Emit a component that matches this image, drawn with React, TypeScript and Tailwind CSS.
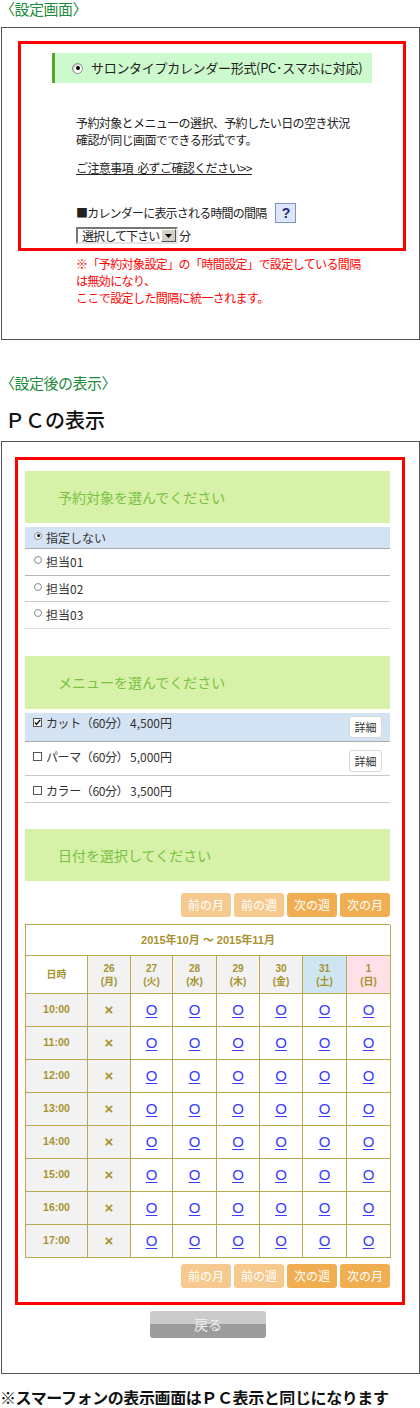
import React from "react";

const FONT = "font-['Noto_Sans_CJK_JP',sans-serif]";
const NUMFONT = "font-['Liberation_Sans','Noto_Sans_CJK_JP',sans-serif]";

function BigRadio() {
  return (
    <div className="w-[11px] h-[11px] rounded-full border border-[#8a8a8a] bg-white flex items-center justify-center shadow-[inset_1px_1px_1px_rgba(0,0,0,0.25)]">
      <div className="w-[4px] h-[4px] rounded-full bg-black" />
    </div>
  );
}

function SmallRadio({ checked }: { checked: boolean }) {
  return (
    <div className="w-[8px] h-[8px] rounded-full border border-[#8a8a8a] bg-white flex items-center justify-center">
      {checked && <div className="w-[3px] h-[3px] rounded-full bg-black" />}
    </div>
  );
}

function Check({ checked }: { checked: boolean }) {
  return (
    <div className="w-[9px] h-[9px] border border-[#555] bg-white flex items-center justify-center">
      {checked && (
        <svg width="7" height="7" viewBox="0 0 7 7">
          <path d="M0.8 3.4 L2.6 5.4 L6.2 0.9" stroke="#111" strokeWidth="1.4" fill="none" />
        </svg>
      )}
    </div>
  );
}

function GreenHeader({ text, h }: { text: string; h: string }) {
  return (
    <div className={`w-[365px] ${h} bg-[#d7f2a8] flex items-center pl-[33px] text-[14px] text-[#79c143]`}>
      {text}
    </div>
  );
}

function NavButtons() {
  const btns = [
    { t: "前の月", light: true },
    { t: "前の週", light: true },
    { t: "次の週", light: false },
    { t: "次の月", light: false },
  ];
  return (
    <div className="w-[365px] flex justify-end gap-[3px]">
      {btns.map((b) => (
        <div
          key={b.t}
          className={`w-[50px] h-[24px] rounded-[3px] flex items-center justify-center text-[12px] text-white ${
            b.light ? "bg-[#f6ca8f]" : "bg-[#f0ae50]"
          }`}
        >
          {b.t}
        </div>
      ))}
    </div>
  );
}

const days = [
  { d: "26", w: "(月)", bg: "bg-[#f2f2f2]" },
  { d: "27", w: "(火)", bg: "bg-[#f2f2f2]" },
  { d: "28", w: "(水)", bg: "bg-[#f2f2f2]" },
  { d: "29", w: "(木)", bg: "bg-[#f2f2f2]" },
  { d: "30", w: "(金)", bg: "bg-[#f2f2f2]" },
  { d: "31", w: "(土)", bg: "bg-[#cfe6f2]" },
  { d: "1", w: "(日)", bg: "bg-[#fde0e8]" },
];

const times = ["10:00", "11:00", "12:00", "13:00", "14:00", "15:00", "16:00", "17:00"];

function Calendar() {
  const cell = "border-r border-b border-[#b9a84e] flex items-center justify-center";
  return (
    <div className="w-[365px] border-l border-t border-[#b9a84e] grid grid-cols-[62px_43px_42px_44px_43px_43px_44px_44px]">
      <div className={`col-span-8 h-[31px] ${cell} bg-white text-[11px] font-bold text-[#a8922f] ${NUMFONT}`}>
        2015年10月 ～ 2015年11月
      </div>
      <div className={`h-[38px] ${cell} bg-white text-[10px] font-bold text-[#a8922f] ${NUMFONT}`}>日時</div>
      {days.map((d) => (
        <div
          key={d.d}
          className={`h-[38px] ${cell} ${d.bg} flex-col text-[10px] leading-[13px] font-bold text-[#a8922f] ${NUMFONT}`}
        >
          <span>{d.d}</span>
          <span>{d.w}</span>
        </div>
      ))}
      {times.map((t) => (
        <React.Fragment key={t}>
          <div className={`h-[33px] ${cell} bg-[#f2f2f2] text-[10.5px] font-bold text-[#a8922f] ${NUMFONT}`}>{t}</div>
          <div className={`h-[33px] ${cell} bg-[#f2f2f2] text-[15px] font-bold text-[#a8922f] ${NUMFONT}`}>×</div>
          {[0, 1, 2, 3, 4, 5].map((i) => (
            <div key={i} className={`h-[33px] ${cell} bg-white`}>
              <span className="font-['Liberation_Sans',sans-serif] text-[15px] leading-[16px] text-[#3b3bff] underline underline-offset-[2px]">
                O
              </span>
            </div>
          ))}
        </React.Fragment>
      ))}
    </div>
  );
}

const staff = [
  { t: "指定しない", checked: true, h: "h-[22px]", bg: "bg-[#d4e3f4]", b: "border-[#aaaaaa]" },
  { t: "担当01", checked: false, h: "h-[27px]", bg: "bg-white", b: "border-[#b5b5b5]" },
  { t: "担当02", checked: false, h: "h-[26px]", bg: "bg-white", b: "border-[#c8c8c8]" },
  { t: "担当03", checked: false, h: "h-[27px]", bg: "bg-white", b: "border-[#dddddd]" },
];

const menus = [
  { n: "カット（60分）", p: "4,500円", checked: true, h: "h-[29px]", pt: "pt-[2px]", bg: "bg-[#d4e3f4]", b: "border-[#aaaaaa]", detail: true },
  { n: "パーマ（60分）", p: "5,000円", checked: false, h: "h-[34px]", pt: "pt-[7px]", bg: "bg-white", b: "border-[#c8c8c8]", detail: true },
  { n: "カラー（60分）", p: "3,500円", checked: false, h: "h-[27px]", pt: "pt-[7px]", bg: "bg-white", b: "border-[#c8c8c8]", detail: false },
];

export default function App() {
  return (
    <div className={`w-[420px] bg-white text-[#222] ${FONT}`}>
      <p className="text-[15px] leading-[18px] tracking-[-0.5px] text-[#1d8b3b]">〈設定画面〉</p>

      <div className="mt-[9px] ml-[1px] w-[419px] h-[313px] border border-[#555]">
        <div className="mt-[13px] ml-[16px] w-[388px] h-[210px] border-[3px] border-[#ff0000]">
          <div className="mt-[9px] ml-[31px] w-[320px] h-[30px] bg-[#ccfacc] border-l-[3px] border-[#5aa52c] flex items-center pl-[17px] gap-[8px]">
            <BigRadio />
            <span className="text-[13px] text-[#222] tracking-[-0.3px]">サロンタイプカレンダー形式(PC･スマホに対応)</span>
          </div>
          <div className="ml-[55px] mt-[31px] text-[12px] leading-[17px] tracking-[-0.6px]">
            <p>予約対象とメニューの選択、予約したい日の空き状況</p>
            <p>確認が同じ画面でできる形式です。</p>
          </div>
          <p className="ml-[55px] mt-[11px] text-[12px] leading-[17px] tracking-[-0.6px] underline">
            ご注意事項&nbsp;&nbsp;必ずご確認ください&gt;&gt;
          </p>
          <div className="ml-[55px] mt-[27px] h-[20px] flex items-center">
            <span className="text-[12px] tracking-[-0.8px]">■カレンダーに表示される時間の間隔</span>
            <div className="ml-[9px] w-[21px] h-[20px] bg-[#dfe6f7] border border-[#7f93c9] flex items-center justify-center text-[14px] font-bold text-[#1c2a78] font-['Liberation_Sans',sans-serif]">
              ?
            </div>
          </div>
          <div className="ml-[55px] mt-[4px] h-[17px] flex items-center">
            <div className="w-[102px] h-[17px] border-2 border-t-[#777] border-l-[#777] border-b-[#e5e5e5] border-r-[#e5e5e5] bg-white flex items-center">
              <span className="flex-1 pl-[4px] whitespace-nowrap text-[12px] leading-[14px] tracking-[-0.9px]">選択して下さい</span>
              <div className="w-[15px] h-[13px] bg-[#d4d0c8] border border-t-white border-l-white border-b-[#555] border-r-[#555] flex items-center justify-center">
                <svg width="7" height="4" viewBox="0 0 7 4">
                  <path d="M0 0 H7 L3.5 4 Z" fill="#000" />
                </svg>
              </div>
            </div>
            <span className="ml-[1px] text-[12px]">分</span>
          </div>
        </div>
        <div className="ml-[74px] mt-[4px] text-[12px] leading-[17px] tracking-[-0.6px] text-[#ff0000]">
          <p>※「予約対象設定」の「時間設定」で設定している間隔</p>
          <p>は無効になり、</p>
          <p>ここで設定した間隔に統一されます。</p>
        </div>
      </div>

      <p className="mt-[34px] text-[15px] leading-[18px] tracking-[-0.5px] text-[#1d8b3b]">〈設定後の表示〉</p>
      <p className="mt-[16px] ml-[5px] text-[20px] leading-[24px] font-medium text-[#111]">ＰＣの表示</p>

      <div className="mt-[9px] ml-[1px] w-[419px] border border-[#555] pb-[35px]">
        <div className="mt-[15px] ml-[13px] w-[390px] border-[3px] border-[#ff0000] pl-[7px] pt-[11px] pb-[14px]">
          <GreenHeader text="予約対象を選んでください" h="h-[52px]" />
          <div className="mt-[4px] w-[365px]">
            {staff.map((s) => (
              <div key={s.t} className={`${s.h} ${s.bg} border-b ${s.b} flex items-center pl-[9px] gap-[4px] text-[12px] text-[#333]`}>
                <div className="-mt-[4px]">
                  <SmallRadio checked={s.checked} />
                </div>
                <span>{s.t}</span>
              </div>
            ))}
          </div>

          <div className="mt-[27px]">
            <GreenHeader text="メニューを選んでください" h="h-[53px]" />
          </div>
          <div className="mt-[4px] w-[365px]">
            {menus.map((m) => (
              <div key={m.n} className={`${m.h} ${m.pt} ${m.bg} border-b ${m.b} flex items-start pl-[8px] pr-[8px] text-[12px] leading-[16px] text-[#333]`}>
                <div className="mt-[3px] mr-[4px]">
                  <Check checked={m.checked} />
                </div>
                <span className="w-[84px] tracking-[-0.4px]">{m.n}</span>
                <span className="flex-1">{m.p}</span>
                {m.detail && (
                  <div className="mt-[1px] w-[33px] h-[22px] bg-white border border-[#d8d8d8] rounded-[3px] flex items-center justify-center text-[11px] text-[#333]">
                    詳細
                  </div>
                )}
              </div>
            ))}
          </div>

          <div className="mt-[26px]">
            <GreenHeader text="日付を選択してください" h="h-[52px]" />
          </div>
          <div className="mt-[12px]">
            <NavButtons />
          </div>
          <div className="mt-[7px]">
            <Calendar />
          </div>
          <div className="mt-[6px]">
            <NavButtons />
          </div>
        </div>

        <div className="mt-[6px] ml-[148px] w-[116px] h-[27px] rounded-[3px] overflow-hidden relative flex flex-col">
          <div className="h-[13px] bg-[#cbcbcb]" />
          <div className="h-[14px] bg-[#9c9c9c]" />
          <span className="absolute inset-0 flex items-center justify-center text-[14px] text-[#eeeeee]">戻る</span>
        </div>
      </div>

      <p className="mt-[15px] text-[16px] leading-[16px] font-bold tracking-[-0.4px] text-[#111] whitespace-nowrap">
        ※スマーフォンの表示画面はＰＣ表示と同じになります
      </p>
    </div>
  );
}
